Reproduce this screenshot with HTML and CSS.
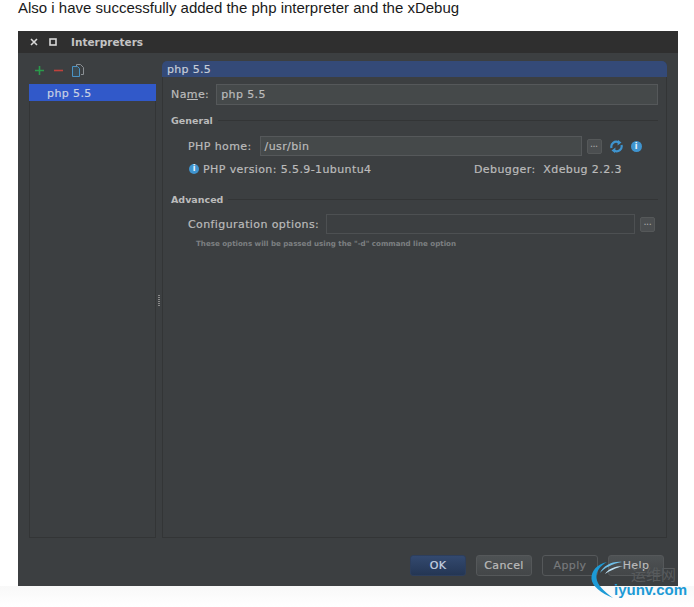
FILE: index.html
```html
<!DOCTYPE html>
<html lang="en">
  <head>
    <meta charset="UTF-8" />
    <meta name="viewport" content="width=device-width, initial-scale=1.0" />
    <title>Interpreters</title>
    <link rel="stylesheet" href="styles.css">
  </head>
  <body>
    <p class="intro">Also i have successfully added the php interpreter and the xDebug</p>
    <div class="window">
      <div class="titlebar">
        <svg class="win-icon" width="8" height="8" viewBox="0 0 8 8"><path d="M1 1l6 6M7 1l-6 6" stroke="#d8d8d8" stroke-width="1.6" fill="none"/></svg>
        <svg class="win-icon" width="8" height="8" viewBox="0 0 8 8"><rect x="1" y="1" width="6" height="6" stroke="#d8d8d8" stroke-width="1.6" fill="none"/></svg>
        <span class="win-title">Interpreters</span>
      </div>
      <div class="content">
        <div class="sidebar">
          <div class="toolbar">
            <svg width="11" height="11" viewBox="0 0 11 11"><path d="M5.5 1v9M1 5.5h9" stroke="#2a9a4b" stroke-width="1.6" fill="none"/></svg>
            <svg width="11" height="11" viewBox="0 0 11 11"><path d="M1 5.5h9" stroke="#c0423c" stroke-width="1.6" fill="none"/></svg>
            <svg width="12" height="13" viewBox="0 0 12 13"><path d="M4.5 2.500V.5h4l3 3v7H9" stroke="#8b9094" fill="none"/><path d="M.5 2.500h5l2 2v8h-7z" stroke="#4a93c4" fill="#3c4a52"/></svg>
          </div>
          <div class="list">
            <div class="list-item">php 5.5</div>
          </div>
        </div>
        <div class="splitter"><span class="grip"></span></div>
        <div class="panel">
          <div class="panel-head">php 5.5</div>
          <div class="name-row">
            <span class="label">Na<u>m</u>e:</span>
            <div class="field">php 5.5</div>
          </div>
          <div class="group-title"><span>General</span><i></i></div>
          <div class="home-row">
            <span class="label">PHP home:</span>
            <div class="field field-home">/usr/bin</div>
            <span class="dots">...</span>
            <svg class="sync" width="13" height="13" viewBox="0 0 13 13"><path d="M1.500 8A5 5 0 0 1 8.500 2.200M11.500 5A5 5 0 0 1 4.500 10.800" stroke="#3f94cf" stroke-width="2.200" fill="none"/><path d="M8 0l3.500 2.500L7.500 5.500zM5 13L1.500 10.500l4-3z" fill="#3f94cf"/></svg>
            <span class="info info-big">i</span>
          </div>
          <div class="version-row">
            <span class="info">i</span>
            <span class="version">PHP version: 5.5.9-1ubuntu4</span>
            <span class="debugger">Debugger:&nbsp; Xdebug 2.2.3</span>
          </div>
          <div class="group-title group-advanced"><span>Advanced</span><i></i></div>
          <div class="config-row">
            <span class="label">Configuration options:</span>
            <div class="field field-config"></div>
            <span class="dots">...</span>
          </div>
          <div class="hint">These options will be passed using the "-d" command line option</div>
        </div>
      </div>
      <div class="buttons">
        <button class="btn btn-ok">OK</button>
        <button class="btn">Cancel</button>
        <button class="btn btn-off">Apply</button>
        <button class="btn">Help</button>
      </div>
    </div>
    <div class="page-foot"></div>
    <div class="watermark">
      <span class="wm-zh">运维网</span>
      <svg width="50" height="50" viewBox="0 0 50 50"><path d="M17 4C7 6 1 13 1.500 21C2 28 11 35 23 40C14 33 7 27 6.500 20C6 13 10 8 17 4z" fill="#1c9ad6"/><path d="M32 4C22 3 13 8 10 15C14 10 22 6 32 4z" fill="#6fbfe8"/><path d="M33 8C25 8 18 11 15 16C19 13 26 10 33 8z" fill="#bfe2f5"/></svg>
      <span class="wm-text">iyunv.com</span>
    </div>
  </body>
</html>
```

FILE: styles.css
```css
html, body {
  margin: 0;
  background-color: #fff;
}

body {
  position: relative;
  height: 607px;
  overflow: hidden;
  font-family: "DejaVu Sans", sans-serif;
}

.intro {
  margin: 0;
  padding-left: 18px;
  height: 31px;
  font-family: "Liberation Sans", Arial, sans-serif;
  font-size: 15px;
  line-height: 15px;
  color: #1a1a1a;
}

.window {
  margin-left: 18px;
  width: 660px;
  height: 555px;
  background-color: #3c3f41;
  display: flex;
  flex-direction: column;
  color: #bbbbbb;
  font-size: 11px;
  font-weight: 500;
  letter-spacing: 0.4px;
  -webkit-text-stroke: 0.2px;
}

.titlebar {
  height: 22px;
  flex-shrink: 0;
  background-color: #2f2f2f;
  display: flex;
  align-items: center;
  padding-left: 12px;
  gap: 11px;
}

.win-title {
  margin-left: 3px;
  color: #c4c4c4;
  font-weight: bold;
  font-size: 10.500px;
  letter-spacing: 0;
  -webkit-text-stroke: 0;
}

.content {
  flex-grow: 1;
  display: flex;
  padding: 8px 11px 0 11px;
}

.sidebar {
  width: 127px;
  display: flex;
  flex-direction: column;
}

.toolbar {
  height: 23px;
  display: flex;
  align-items: center;
  gap: 8px;
  padding: 0 0 4px 5px;
  box-sizing: border-box;
}

.list {
  flex-grow: 1;
  border: 1px solid #333536;
  border-width: 0 1px 1px 1px;
}

.list-item {
  height: 17px;
  line-height: 19px;
  margin-right: -1px;
  margin-left: -1px;
  padding-left: 18px;
  background-color: #3159c9;
  color: #c8d0e4;
}

.splitter {
  width: 6px;
  display: flex;
  align-items: center;
  justify-content: center;
}

.grip {
  width: 2px;
  height: 12px;
  margin-top: 2px;
  background-image: repeating-linear-gradient(#8a8a8a 0 1px, transparent 1px 2px);
}

.panel {
  width: 505px;
  border: 1px solid #333536;
  border-top: none;
  border-radius: 5px 5px 0 0;
  box-sizing: border-box;
  position: relative;
}

.panel-head {
  height: 16px;
  line-height: 17px;
  margin: 0 -1px;
  padding-left: 5px;
  background-color: #344a78;
  border-radius: 5px 5px 0 0;
  color: #c6cdd9;
  letter-spacing: 0.3px;
}

.label {
  color: #bbbbbb;
}

.field {
  height: 21px;
  box-sizing: border-box;
  line-height: 19px;
  padding-left: 4px;
  background-color: #45494a;
  border: 1px solid #55585a;
  color: #bbbbbb;
}

.name-row {
  display: flex;
  align-items: center;
  margin-top: 7px;
  padding-left: 8px;
  gap: 7px;
}

.name-row .field {
  width: 442px;
}

.group-title {
  display: flex;
  align-items: center;
  gap: 5px;
  margin: 8px 8px 0 8px;
  height: 14px;
  font-size: 9.500px;
  font-weight: bold;
  letter-spacing: 0;
  -webkit-text-stroke: 0;
}

.group-title i {
  flex-grow: 1;
  height: 1px;
  background-color: #333536;
}

.home-row {
  display: flex;
  align-items: center;
  margin-top: 9px;
  padding-left: 25px;
}

.home-row .field {
  height: 20px;
}

.field-home {
  width: 322px;
  margin-left: 8px;
}

.dots {
  width: 15px;
  height: 15px;
  box-sizing: border-box;
  margin-left: 5px;
  border: 1px solid #555859;
  border-radius: 2px;
  background-color: #4b4e50;
  font-size: 8px;
  line-height: 9px;
  text-align: center;
  color: #aaa;
  letter-spacing: 0;
}

.sync {
  margin-left: 8px;
}

.info {
  width: 10px;
  height: 10px;
  border-radius: 50%;
  background-color: #3f94cf;
  color: #eef6fb;
  font-size: 8px;
  font-weight: bold;
  line-height: 10px;
  text-align: center;
  flex-shrink: 0;
  letter-spacing: 0;
  -webkit-text-stroke: 0;
}

.info-big {
  width: 11px;
  height: 11px;
  line-height: 11px;
  margin-left: 8px;
}

.version-row {
  display: flex;
  align-items: center;
  margin-top: 5px;
  padding-left: 26px;
  height: 16px;
}

.version {
  margin-left: 4px;
  width: 271px;
}

.group-advanced {
  margin-top: 15px;
}

.config-row {
  display: flex;
  align-items: center;
  margin-top: 8px;
  padding-left: 25px;
}

.field-config {
  width: 309px;
  height: 20px;
  margin-left: 7px;
  background-color: #3c3f41;
  border-color: #4d5052;
}

.hint {
  margin: 5px 0 0 33px;
  font-size: 7.100px;
  font-weight: bold;
  letter-spacing: 0;
  -webkit-text-stroke: 0;
  color: #7d8082;
}

.buttons {
  height: 48px;
  flex-shrink: 0;
  display: flex;
  justify-content: flex-end;
  gap: 10px;
  padding: 17px 14px 0 0;
  box-sizing: border-box;
}

.btn {
  width: 56px;
  height: 21px;
  box-sizing: border-box;
  padding: 0;
  border: 1px solid #55585a;
  border-radius: 3px;
  background: linear-gradient(#4e5254, #434648);
  color: #bbbbbb;
  font-family: "DejaVu Sans", sans-serif;
  font-size: 11px;
  font-weight: 500;
  letter-spacing: 0.4px;
}

.btn-ok {
  background: linear-gradient(#33496f, #243654);
  border-color: #2d3e5c;
  color: #c9d3e2;
}

.btn-off {
  background: #3c3f41;
  color: #77797b;
}

.page-foot {
  height: 21px;
  background: linear-gradient(#f8f8f8, #fff);
}

.watermark {
  position: absolute;
  left: 590px;
  top: 558px;
  width: 104px;
  height: 49px;
}

.watermark svg {
  position: absolute;
  left: 0;
  top: 0;
}

.wm-zh {
  position: absolute;
  left: 41px;
  top: 5px;
  font-family: "Noto Sans CJK SC", sans-serif;
  font-size: 15px;
  color: #585b5d;
  white-space: nowrap;
}

.wm-text {
  position: absolute;
  left: 24px;
  top: 23px;
  font-family: "Liberation Sans", Arial, sans-serif;
  font-size: 15px;
  font-weight: bold;
  color: #1c9ad6;
  white-space: nowrap;
}
```
